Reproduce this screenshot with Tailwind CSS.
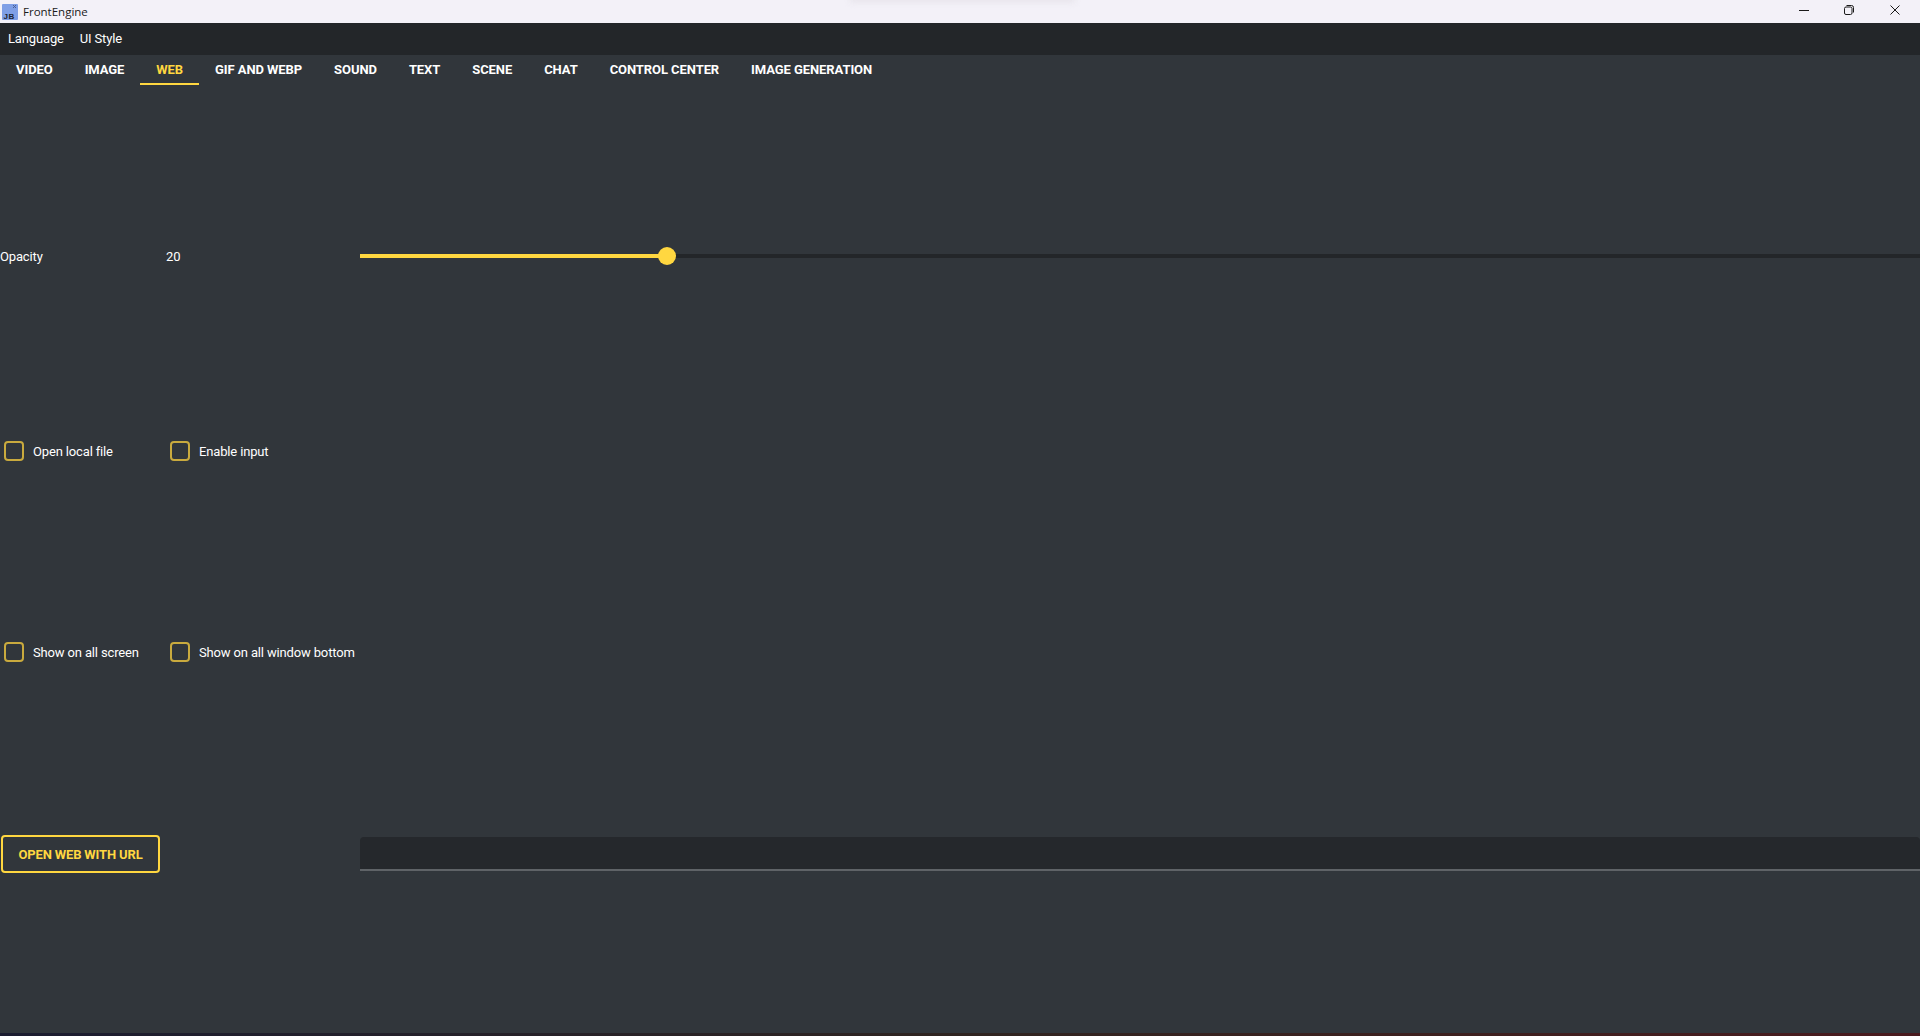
<!DOCTYPE html>
<html lang="en">
<head>
  <meta charset="UTF-8" />
  <meta name="viewport" content="width=device-width, initial-scale=1.0" />
  <title>FrontEngine</title>
  <script src="https://cdn.jsdelivr.net/npm/@tailwindcss/browser@4"></script>
</head>
<body class="bg-[#31363b] h-screen overflow-hidden flex flex-col font-['Roboto',sans-serif] text-[13px] tracking-[-0.15px] text-white">
  <!-- title bar -->
  <div class="relative h-[23px] shrink-0 bg-[#f3f1f8] flex items-center text-[#1a1a1a]">
    <div class="absolute left-[850px] top-[-6px] w-[225px] h-[8px] bg-[#e6e3ea] blur-[3px]"></div>
    <svg class="ml-[2px] mt-[1px]" width="16" height="16" viewBox="0 0 16 16">
      <rect width="16" height="16" rx="1" fill="#7f9fe6" />
      <path d="M11 1l3 3M14 1l-3 3" stroke="#4b5f96" stroke-width="1" />
      <text x="1.500" y="15" font-family="Liberation Sans, sans-serif" font-size="8" font-weight="700" letter-spacing="0.500" fill="#1d2433">JB</text>
    </svg>
    <span class="ml-[5px] text-[11.5px] tracking-normal font-['Open_Sans',sans-serif]">FrontEngine</span>
    <div class="ml-auto flex items-center h-full pb-[3px]">
      <svg class="mr-[35px]" width="10" height="10" viewBox="0 0 10 10"><path d="M0 5.500h10" stroke="#1a1a1a" stroke-width="1" /></svg>
      <svg class="mr-[36px]" width="10" height="10" viewBox="0 0 10 10" fill="none" stroke="#1a1a1a" stroke-width="1"><rect x="0.500" y="2" width="7.500" height="7.500" rx="1.500" /><path d="M2.500 0.500h5a2 2 0 0 1 2 2v5" /></svg>
      <svg class="mr-[20px]" width="10" height="10" viewBox="0 0 10 10"><path d="M0.500 0.500l9 9M9.500 0.500l-9 9" stroke="#1a1a1a" stroke-width="1" /></svg>
    </div>
  </div>

  <!-- menu bar -->
  <div class="h-[32px] shrink-0 bg-[#232629] flex items-center">
    <span class="ml-[8px]">Language</span>
    <span class="ml-[16px]">UI Style</span>
  </div>

  <!-- tabs -->
  <div class="h-[30px] shrink-0 flex font-bold tracking-[-0.08px]">
    <div class="px-4 pt-[5px] border-b-2 border-transparent">VIDEO</div>
    <div class="px-4 pt-[5px] border-b-2 border-transparent">IMAGE</div>
    <div class="px-4 pt-[5px] border-b-2 border-[#ffd740] text-[#ffd740]">WEB</div>
    <div class="px-4 pt-[5px] border-b-2 border-transparent">GIF AND WEBP</div>
    <div class="px-4 pt-[5px] border-b-2 border-transparent">SOUND</div>
    <div class="px-4 pt-[5px] border-b-2 border-transparent">TEXT</div>
    <div class="px-4 pt-[5px] border-b-2 border-transparent">SCENE</div>
    <div class="px-4 pt-[5px] border-b-2 border-transparent">CHAT</div>
    <div class="px-4 pt-[5px] border-b-2 border-transparent">CONTROL CENTER</div>
    <div class="px-4 pt-[5px] border-b-2 border-transparent">IMAGE GENERATION</div>
  </div>

  <!-- web page settings -->
  <div class="flex-1 pt-[74px] grid grid-cols-[166px_194px_1fr] grid-rows-[194px_196px_206px_198px] items-center">
    <div class="pt-[2px]">Opacity</div>
    <div class="pt-[2px]">20</div>
    <div class="relative h-[4px] bg-[#232629]">
      <div class="h-full w-[307px] bg-[#ffd740]"></div>
      <div class="absolute left-[298px] top-[-7px] size-[18px] rounded-full bg-[#ffd740]"></div>
    </div>

    <div class="flex items-center gap-[9px] pl-[4px]">
      <div class="size-[20px] rounded-[4px] border-2 border-[#c9aa3e]"></div>
      <span class="pt-[2px]">Open local file</span>
    </div>
    <div class="flex items-center gap-[9px] pl-[4px]">
      <div class="size-[20px] rounded-[4px] border-2 border-[#c9aa3e]"></div>
      <span class="pt-[2px]">Enable input</span>
    </div>
    <div></div>

    <div class="flex items-center gap-[9px] pl-[4px] whitespace-nowrap">
      <div class="size-[20px] rounded-[4px] border-2 border-[#c9aa3e]"></div>
      <span class="pt-[2px]">Show on all screen</span>
    </div>
    <div class="flex items-center gap-[9px] pl-[4px] whitespace-nowrap">
      <div class="size-[20px] rounded-[4px] border-2 border-[#c9aa3e]"></div>
      <span class="pt-[2px]">Show on all window bottom</span>
    </div>
    <div></div>

    <div class="col-span-2">
      <button class="ml-[1px] w-[159px] h-[38px] pt-[2px] rounded-[4px] border-2 border-[#ffd740] text-[#ffd740] font-bold">OPEN WEB WITH URL</button>
    </div>
    <div class="h-[34px] rounded-t-[4px] bg-[#25282c] border-b-2 border-[#5f6367]"></div>
  </div>

  <!-- desktop showing through under the window -->
  <div class="h-[3px] shrink-0 bg-gradient-to-r from-[#1b1c30] via-[#2f2420] to-[#4a1a1e]"></div>
</body>
</html>
